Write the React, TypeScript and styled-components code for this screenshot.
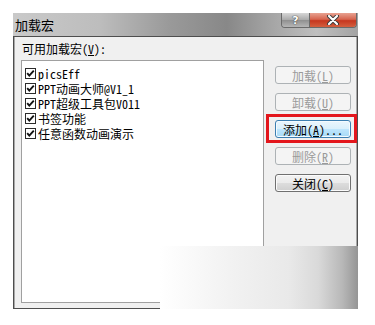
import styled, { createGlobalStyle } from 'styled-components'

const GlobalStyle = createGlobalStyle`
	html, body {
		margin: 0;
		padding: 0;
		background: #ffffff;
	}
	body {
		font-family: "Noto Sans Mono CJK SC", "Noto Sans CJK SC", sans-serif;
		font-size: 12px;
		color: #000;
	}
`

const addins = ['picsEff', 'PPT动画大师@V1_1', 'PPT超级工具包V011', '书签功能', '任意函数动画演示']

const CheckMark = () => (
	<svg width="11" height="11" viewBox="0 0 11 11">
		<rect x="0.5" y="0.5" width="10" height="10" fill="#fff" stroke="#2b2b2b" />
		<path d="M2.2 5.2 L4.3 7.6 L8.8 2.6" fill="none" stroke="#111" strokeWidth="1.9" />
	</svg>
)

const App = () => {
	return (
		<Page>
			<GlobalStyle />
			<Window>
				<TitleBar>
					<Title>加载宏</Title>
					<Caption>
						<HelpButton>?</HelpButton>
						<CloseButton>
							<svg width="14" height="10" viewBox="0 0 14 10">
								<path d="M3 1 L11 9 M11 1 L3 9" stroke="#3a3a3a" strokeWidth="4" strokeLinecap="round" />
								<path d="M3 1 L11 9 M11 1 L3 9" stroke="#ffffff" strokeWidth="2.2" strokeLinecap="round" />
							</svg>
						</CloseButton>
					</Caption>
				</TitleBar>
				<Body>
					<LeftColumn>
						<Label>可用加载宏(<u>V</u>):</Label>
						<ListBox>
							{addins.map((name) => (
								<Item key={name}>
									<CheckMark />
									<ItemText>{name}</ItemText>
								</Item>
							))}
						</ListBox>
					</LeftColumn>
					<ButtonColumn>
						<DialogButton $variant="disabled">加载(<u>L</u>)</DialogButton>
						<DialogButton $variant="disabled">卸载(<u>U</u>)</DialogButton>
						<Marked>
							<DialogButton $variant="hot">添加(<u>A</u>)...</DialogButton>
						</Marked>
						<DialogButton $variant="disabled">删除(<u>R</u>)</DialogButton>
						<DialogButton $variant="normal">关闭(<u>C</u>)</DialogButton>
					</ButtonColumn>
				</Body>
				<Fade />
			</Window>
		</Page>
	)
}

export default App

const Page = styled.div`
	padding: 13px 0 0 13px;
	width: 375px;
	height: 325px;
	box-sizing: border-box;
`

const Window = styled.div`
	position: relative;
	width: 345px;
	height: 296px;
	display: flex;
	flex-direction: column;
`

const TitleBar = styled.div`
	height: 23px;
	display: flex;
	justify-content: space-between;
	align-items: flex-start;
	background: linear-gradient(90deg, #c9c9c9 0%, #bdbdbd 25%, #9a9a9a 45%, #888888 62%, #a5a5a5 75%, #bfbfbf 88%, #a3a3a3 100%);
`

const Title = styled.div`
	padding-left: 2px;
	line-height: 23px;
	font-size: 13px;
`

const Caption = styled.div`
	display: flex;
	height: 14px;
	margin-right: 1px;
	border: 1px solid #6a6a6a;
	border-top: none;
	border-radius: 0 0 4px 4px;
	overflow: hidden;
`

const HelpButton = styled.div`
	width: 27px;
	display: flex;
	align-items: center;
	justify-content: center;
	background: linear-gradient(#d6d6d6, #a9a9a9 50%, #8f8f8f 51%, #b5b5b5);
	border-right: 1px solid #6a6a6a;
	color: #fff;
	font-family: "DejaVu Sans", sans-serif;
	font-weight: bold;
	font-size: 11px;
	text-shadow: 0 0 1px #333, 0 0 1px #333;
`

const CloseButton = styled.div`
	width: 46px;
	display: flex;
	align-items: center;
	justify-content: center;
	background: linear-gradient(#e8a291, #d6654f 45%, #c6371f 55%, #d4603f);
`

const Body = styled.div`
	flex: 1;
	display: flex;
	background: #f0f0f0;
	border: 1px solid #4e4e4e;
	box-shadow: inset 1px 0 0 #a8a8a8, inset -1px 0 0 #a8a8a8;
	padding: 5px 0 5px 7px;
`

const LeftColumn = styled.div`
	width: 243px;
	display: flex;
	flex-direction: column;
`

const Label = styled.div`
	height: 13px;
	line-height: 13px;
	margin-bottom: 5px;
	padding-left: 1px;
`

const ListBox = styled.div`
	flex: 1;
	background: #fff;
	border: 1px solid #a0a0a0;
	padding: 5px 3px;
	display: flex;
	flex-direction: column;
`

const Item = styled.div`
	height: 15px;
	display: flex;
	align-items: center;
	gap: 2px;
`

const ItemText = styled.div`
	height: 15px;
	line-height: 15px;
	overflow: hidden;
	white-space: nowrap;
`

const ButtonColumn = styled.div`
	margin-left: 11px;
	padding-top: 24px;
	width: 76px;
	display: flex;
	flex-direction: column;
	gap: 9px;
`

const Marked = styled.div`
	position: relative;
	&::after {
		content: '';
		position: absolute;
		left: -9px;
		right: -6px;
		top: -6px;
		bottom: -5px;
		border: 3px solid #e3161c;
	}
`

const variants = {
	normal: `
		border-color: #707070;
		color: #000;
		background: linear-gradient(#f2f2f2, #ebebeb 50%, #dddddd 51%, #cfcfcf);
		box-shadow: inset 0 0 0 1px #fbfbfb;
	`,
	hot: `
		border-color: #3c7fb1;
		color: #000;
		background: linear-gradient(#eaf6fd, #d9f0fc 50%, #bee6fd 51%, #a7d9f5);
		box-shadow: inset 0 0 0 1px #f4fbff;
	`,
	disabled: `
		border-color: #adb2b5;
		color: #9a9a9a;
		background: #f4f4f4;
	`,
}

const DialogButton = styled.div<{ $variant: keyof typeof variants }>`
	box-sizing: border-box;
	width: 76px;
	height: 18px;
	border: 1px solid;
	border-radius: 3px;
	display: flex;
	align-items: center;
	justify-content: center;
	font-size: 12px;
	${(p) => variants[p.$variant]}
`

const Fade = styled.div`
	position: absolute;
	left: 147px;
	top: 233px;
	width: 198px;
	height: 63px;
	background: linear-gradient(90deg, #ffffff 0%, #f2f2f2 35%, #e9e9e9 65%, #d9d9d9 80%, #b8b8b8 92%, #959595 100%);
`
